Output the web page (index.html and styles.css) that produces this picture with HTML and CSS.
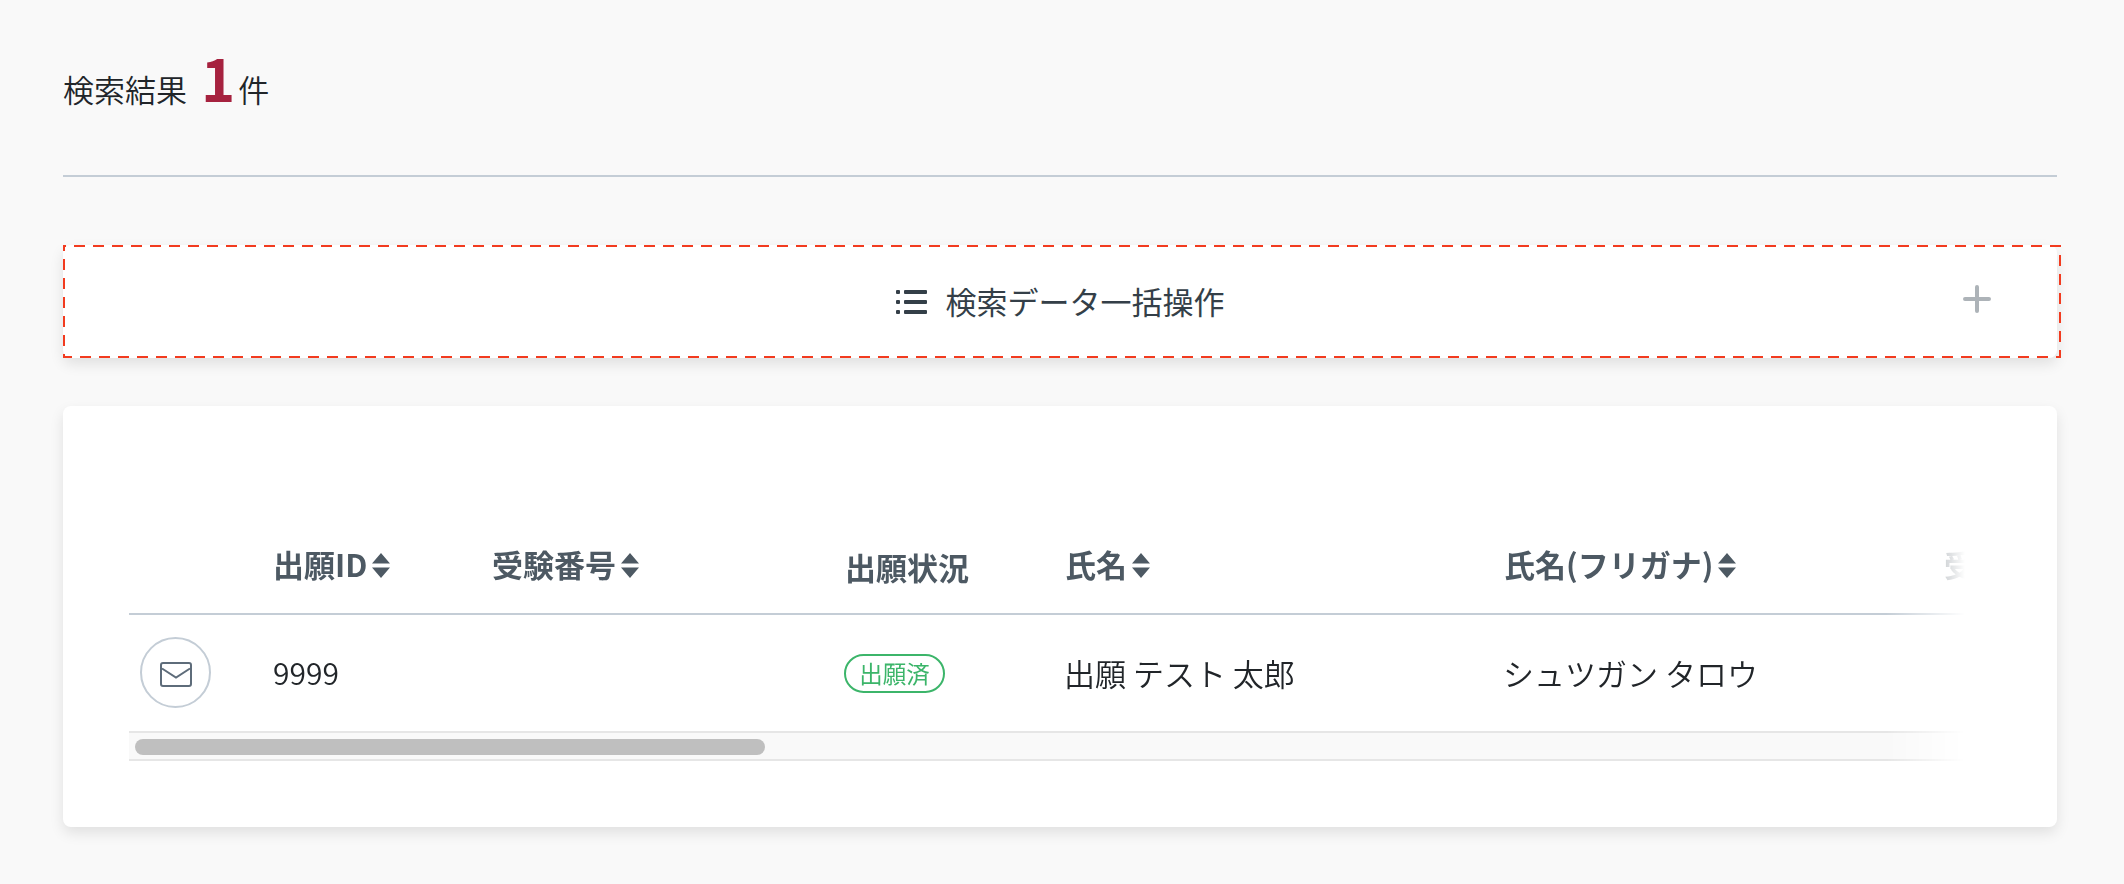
FILE: index.html
```html
<!DOCTYPE html>
<html lang="ja">
<head>
<meta charset="utf-8">
<title>検索結果</title>
<link rel="stylesheet" href="styles.css">
</head>
<body>
<main class="page">
  <header class="result">
    <span class="result-label">検索結果</span>
    <span class="result-count">1</span>
    <span class="result-unit">件</span>
  </header>
  <section class="bulk">
    <svg class="bulk-dash" width="1998" height="113" viewBox="0 0 1998 113"><rect x="1" y="1" width="1996" height="111" fill="none" stroke="#f23b1f" stroke-width="2" stroke-dasharray="11 8" stroke-dashoffset="9"/></svg>
    <div class="bulk-title">
      <svg class="bulk-list" width="31" height="24" viewBox="0 0 31 24"><g fill="#343f48"><rect x="0" y="0" width="4" height="4" rx="1"/><rect x="0" y="10" width="4" height="4" rx="1"/><rect x="0" y="20" width="4" height="4" rx="1"/><rect x="8" y="0" width="23" height="4" rx="1"/><rect x="8" y="10" width="23" height="4" rx="1"/><rect x="8" y="20" width="23" height="4" rx="1"/></g></svg>
      <span>検索データ一括操作</span>
    </div>
    <svg class="bulk-plus" width="28" height="28" viewBox="0 0 28 28"><path d="M14 2V26M2 14H26" stroke="#adb3b8" stroke-width="4" stroke-linecap="round"/></svg>
  </section>
  <section class="card">
    <div class="table-fade">
      <table class="list">
        <colgroup><col class="c1"><col class="c2"><col class="c3"><col class="c4"><col class="c5"><col class="c6"><col class="c7"></colgroup>
        <thead>
          <tr>
            <th></th>
            <th><span class="th-in">出願ID<svg class="sort" width="18" height="25" viewBox="0 0 18 25"><path d="M9 0 L18 10.5 H0Z M0 14.5H18L9 25Z" fill="#4d5963"/></svg></span></th>
            <th><span class="th-in">受験番号<svg class="sort" width="18" height="25" viewBox="0 0 18 25"><path d="M9 0 L18 10.5 H0Z M0 14.5H18L9 25Z" fill="#4d5963"/></svg></span></th>
            <th><span class="th-in th-plain">出願状況</span></th>
            <th><span class="th-in">氏名<svg class="sort" width="18" height="25" viewBox="0 0 18 25"><path d="M9 0 L18 10.5 H0Z M0 14.5H18L9 25Z" fill="#4d5963"/></svg></span></th>
            <th><span class="th-in">氏名(フリガナ)<svg class="sort" width="18" height="25" viewBox="0 0 18 25"><path d="M9 0 L18 10.5 H0Z M0 14.5H18L9 25Z" fill="#4d5963"/></svg></span></th>
            <th><span class="th-in">受</span></th>
          </tr>
        </thead>
        <tbody>
          <tr>
            <td><span class="mail"><svg width="32" height="25" viewBox="0 0 32 25"><rect x="1" y="1" width="30" height="23" rx="2" fill="none" stroke="#5e6c7a" stroke-width="2"/><path d="M2 6.5 L16 15.5 L30 6.5" fill="none" stroke="#5e6c7a" stroke-width="2"/></svg></span></td>
            <td class="num">9999</td>
            <td></td>
            <td><span class="badge">出願済</span></td>
            <td>出願 テスト 太郎</td>
            <td>シュツガン タロウ</td>
            <td></td>
          </tr>
        </tbody>
      </table>
      <div class="scroll-track"><div class="scroll-thumb"></div></div>
    </div>
  </section>
</main>
</body>
</html>
```
FILE: styles.css
```css
* { box-sizing: border-box; }
html, body { margin: 0; padding: 0; }
body {
  background: #f9f9f9;
  color: #212529;
  font-family: "Noto Sans CJK JP", "Noto Sans", sans-serif;
  width: 2124px;
  height: 884px;
  overflow: hidden;
}
.page { padding: 0 67px 0 63px; }
.result {
  height: 177px;
  border-bottom: 2px solid #c4cdd6;
  padding-top: 41px;
  display: flex;
  align-items: baseline;
  font-size: 31px;
  line-height: 72px;
  font-weight: 350;
}
.result-count {
  color: #a6223f;
  font-size: 58px;
  font-weight: 700;
  margin: 0 3px 0 14px;
}
.bulk {
  position: relative;
  margin-top: 68px;
  height: 113px;
  background: #fff;
  border-radius: 8px;
  box-shadow: 0 6px 14px rgba(0,0,0,.1);
  display: flex;
  align-items: center;
  justify-content: center;
}
.bulk-dash { position: absolute; left: 0; top: 0; }
.bulk-title {
  display: flex;
  align-items: center;
  gap: 19px;
  font-size: 31px;
  color: #343f48;
  padding-bottom: 3px;
}
.bulk-list { margin-top: 3px; }
.bulk-plus { position: absolute; right: 66px; top: 40px; }
.card {
  margin-top: 48px;
  height: 421px;
  background: #fff;
  border-radius: 8px;
  box-shadow: 0 6px 14px rgba(0,0,0,.1);
  padding: 117px 66px 0;
}
.table-fade {
  width: 1836px;
  overflow: hidden;
  -webkit-mask-image: linear-gradient(to right, #000 1757px, transparent 1836px);
  mask-image: linear-gradient(to right, #000 1757px, transparent 1836px);
}
.list {
  table-layout: fixed;
  border-collapse: collapse;
  width: 2200px;
}
.c1 { width: 143px; }
.c2 { width: 219px; }
.c3 { width: 353px; }
.c4 { width: 220px; }
.c5 { width: 439px; }
.c6 { width: 440px; }
.c7 { width: 386px; }
.list th {
  height: 91px;
  padding: 0;
  text-align: left;
  vertical-align: top;
  border-bottom: 2px solid #c4cdd6;
  font-size: 31px;
  font-weight: 700;
  color: #4d5963;
}
.th-in {
  display: flex;
  align-items: center;
  gap: 5px;
  line-height: 44px;
  padding-left: 1px;
  margin-top: 19px;
}
.th-plain { margin-top: 22px; }
.sort { margin-top: 2px; }
.list td {
  height: 117px;
  padding: 0 0 2px;
  font-size: 31px;
  font-weight: 350;
  color: #212529;
  vertical-align: middle;
}
.list .num { font-size: 30px; padding-left: 1px; }
.mail {
  display: flex;
  align-items: center;
  justify-content: center;
  width: 71px;
  height: 71px;
  margin-left: 11px;
  padding-top: 5px;
  border: 2px solid #c4cdd6;
  border-radius: 50%;
}
.badge {
  display: flex;
  align-items: center;
  justify-content: center;
  width: 101px;
  height: 39px;
  margin-top: 2px;
  border: 2px solid #3cb56a;
  border-radius: 20px;
  color: #3cb56a;
  font-size: 23.5px;
  font-weight: 400;
}
.scroll-track {
  height: 30px;
  border-top: 2px solid #e6e6e6;
  border-bottom: 2px solid #e6e6e6;
  background: #f9f9f9;
  padding: 6px 0 0 6px;
}
.scroll-thumb {
  width: 630px;
  height: 16px;
  border-radius: 8px;
  background: #bfbfbf;
}
```
